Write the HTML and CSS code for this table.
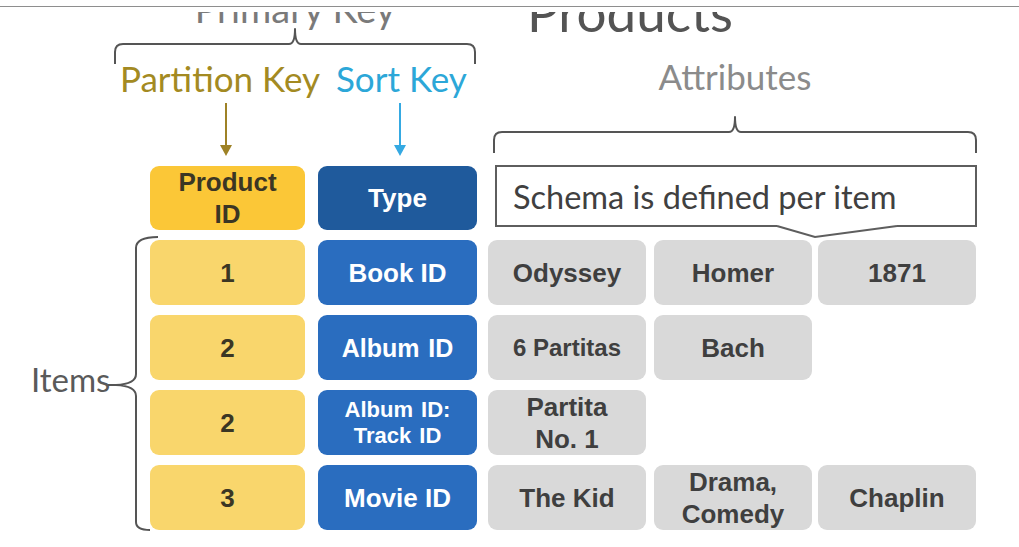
FILE: index.html
```html
<!DOCTYPE html>
<html lang="en">
<head>
<meta charset="utf-8">
<title>Products</title>
<link rel="stylesheet" href="styles.css">
</head>
<body>
<div class="topbar"></div>
<header class="head">
  <div class="keys">
    <div class="pk-title">Primary Key</div>
    <svg class="brace brace-pk" width="364" height="36" viewBox="0 0 364 36">
      <path d="M2,36 L2,24 Q2,16 10,16 L176,16 Q182,16 182,1 Q182,16 188,16 L354,16 Q362,16 362,24 L362,36" />
    </svg>
    <div class="key-labels">
      <span class="lbl-partition">Partition Key</span>
      <span class="lbl-sort">Sort Key</span>
    </div>
    <div class="arrows">
      <svg class="arrow arrow-gold" width="14" height="52" viewBox="0 0 14 52">
        <line x1="7" y1="0" x2="7" y2="44" />
        <polygon points="1,42 13,42 7,53" />
      </svg>
      <svg class="arrow arrow-blue" width="14" height="52" viewBox="0 0 14 52">
        <line x1="7" y1="0" x2="7" y2="44" />
        <polygon points="1,42 13,42 7,53" />
      </svg>
    </div>
  </div>
  <div class="attrs">
    <div class="title">Products</div>
    <div class="attr-label">Attributes</div>
    <svg class="brace brace-attr" width="486" height="37" viewBox="0 0 486 37">
      <path d="M2,37 L2,24 Q2,16 10,16 L237,16 Q243,16 243,1 Q243,16 249,16 L476,16 Q484,16 484,24 L484,37" />
    </svg>
  </div>
</header>

<main class="table">
  <div class="items">
    <span class="items-label">Items</span>
    <svg class="items-brace" width="52" height="290" viewBox="0 0 52 290">
      <path d="M0,145 L8,145 M50,-3 Q28,-3 28,8 L28,134 Q28,144 8,145 Q28,146 28,156 L28,282 Q28,290 42,290" />
    </svg>
  </div>

  <div class="cell pk-head">Product<br>ID</div>
  <div class="cell sk-head">Type</div>
  <div class="callout">
    <span>Schema is defined per item</span>
    <svg class="pointer" width="122" height="14" viewBox="0 0 122 14">
      <path class="pointer-fill" d="M0,0 L120,0 L120,1 L38,12 L0,1 Z" />
      <path class="pointer-line" d="M0,1 L38,12 L120,1" />
    </svg>
  </div>

  <div class="cell pk">1</div>
  <div class="cell sk">Book ID</div>
  <div class="cell attr">Odyssey</div>
  <div class="cell attr">Homer</div>
  <div class="cell attr">1871</div>

  <div class="cell pk">2</div>
  <div class="cell sk album">Album ID</div>
  <div class="cell attr small">6 Partitas</div>
  <div class="cell attr">Bach</div>
  <div class="empty"></div>

  <div class="cell pk">2</div>
  <div class="cell sk two-line-small">Album ID:<br>Track ID</div>
  <div class="cell attr">Partita<br>No. 1</div>
  <div class="empty"></div>
  <div class="empty"></div>

  <div class="cell pk">3</div>
  <div class="cell sk">Movie ID</div>
  <div class="cell attr">The Kid</div>
  <div class="cell attr">Drama,<br>Comedy</div>
  <div class="cell attr">Chaplin</div>
</main>
</body>
</html>
```

FILE: styles.css
```css
html, body {
  margin: 0;
  padding: 0;
  background: #ffffff;
}

body {
  width: 1019px;
  height: 547px;
  overflow: hidden;
  font-family: "Lato", "Liberation Sans", sans-serif;
}

.topbar {
  height: 6px;
  border-bottom: 1px solid #8e8e8e;
}

/* The header is a clipped slice of a larger slide: titles are cut at its top edge */
.head {
  margin-top: 5px;
  height: 153px;
  overflow: hidden;
  display: flex;
}

/* ---------- Primary key group ---------- */
.keys {
  margin-left: 113px;
  width: 364px;
  display: flex;
  flex-direction: column;
}

.pk-title {
  font-size: 38px;
  line-height: 1;
  height: 38px;
  margin-top: -23px;
  text-align: center;
  color: #7a7a7a;
  white-space: nowrap;
}

.brace {
  display: block;
  overflow: visible;
}

.brace path,
.items-brace path {
  fill: none;
  stroke: #555555;
  stroke-width: 2;
  stroke-linejoin: round;
}

.brace-pk {
  margin-top: 1px;
}

.key-labels {
  margin-top: -3px;
  display: flex;
  gap: 16px;
  padding-left: 7px;
  font-size: 35px;
  line-height: 1;
  height: 35px;
  white-space: nowrap;
}

.lbl-partition {
  color: #a38a22;
}

.lbl-sort {
  color: #2ca7d8;
}

.arrows {
  margin-top: 7px;
  display: flex;
  padding-left: 106px;
  gap: 160px;
}

.arrow {
  display: block;
  overflow: visible;
}

.arrow line {
  stroke-width: 2;
}

.arrow-gold line { stroke: #9e8226; }
.arrow-gold polygon { fill: #9e8226; }
.arrow-blue line { stroke: #35a9e2; }
.arrow-blue polygon { fill: #35a9e2; }

/* ---------- Attributes group ---------- */
.attrs {
  margin-left: 15px;
  width: 486px;
  display: flex;
  flex-direction: column;
}

.title {
  font-size: 53px;
  line-height: 1;
  height: 53px;
  margin-top: -27px;
  padding-left: 35px;
  color: #545454;
}

.attr-label {
  margin-top: 21px;
  font-size: 35px;
  line-height: 1;
  height: 35px;
  text-align: center;
  color: #8b8b8b;
}

.brace-attr {
  margin-top: 22px;
}

/* ---------- Table ---------- */
.table {
  display: grid;
  grid-template-columns: 150px 168px 170px 166px 164px 158px;
  grid-template-rows: repeat(5, 65px);
  row-gap: 10px;
}

.items {
  grid-column: 1;
  grid-row: 2 / 6;
  display: flex;
  align-items: center;
}

.items-label {
  margin-left: 31px;
  margin-bottom: 12px;
  width: 77px;
  font-size: 33px;
  line-height: 1;
  color: #5a5a5a;
}

.items-brace {
  display: block;
  align-self: stretch;
  overflow: visible;
}

.cell {
  display: flex;
  align-items: center;
  justify-content: center;
  text-align: center;
  border-radius: 9px;
  font-family: "Liberation Sans", "Arial", sans-serif;
  font-weight: bold;
  font-size: 26px;
  line-height: 32px;
}

.pk-head {
  grid-column: 2;
  width: 155px;
  margin-top: 1px;
  background: #fbc737;
  color: #3b3624;
}

.sk-head {
  grid-column: 3;
  width: 159px;
  margin-top: 1px;
  background: #1f5a9c;
  color: #ffffff;
}

.pk {
  grid-column: 2;
  width: 155px;
  background: #f9d66c;
  color: #3b3624;
}

.sk {
  width: 159px;
  background: #2a6dbf;
  color: #ffffff;
}

.attr {
  width: 158px;
  background: #d9d9d9;
  color: #3f3f3f;
}

.small {
  font-size: 24px;
}

.album {
  font-size: 25px;
  word-spacing: 2px;
}

.two-line-small {
  font-size: 22px;
  line-height: 26px;
  word-spacing: 2px;
}

.callout {
  grid-column: 4 / 7;
  margin-left: 7px;
  width: 482px;
  height: 62px;
  box-sizing: border-box;
  border: 2px solid #5e5e5e;
  position: relative;
  display: flex;
  align-items: center;
  padding-left: 16px;
  font-size: 32.5px;
  color: #404040;
  white-space: nowrap;
}

.pointer {
  position: absolute;
  left: 280px;
  top: 100%;
  overflow: visible;
}

.pointer-fill {
  fill: #ffffff;
}

.pointer-line {
  fill: none;
  stroke: #5e5e5e;
  stroke-width: 2;
}
```
